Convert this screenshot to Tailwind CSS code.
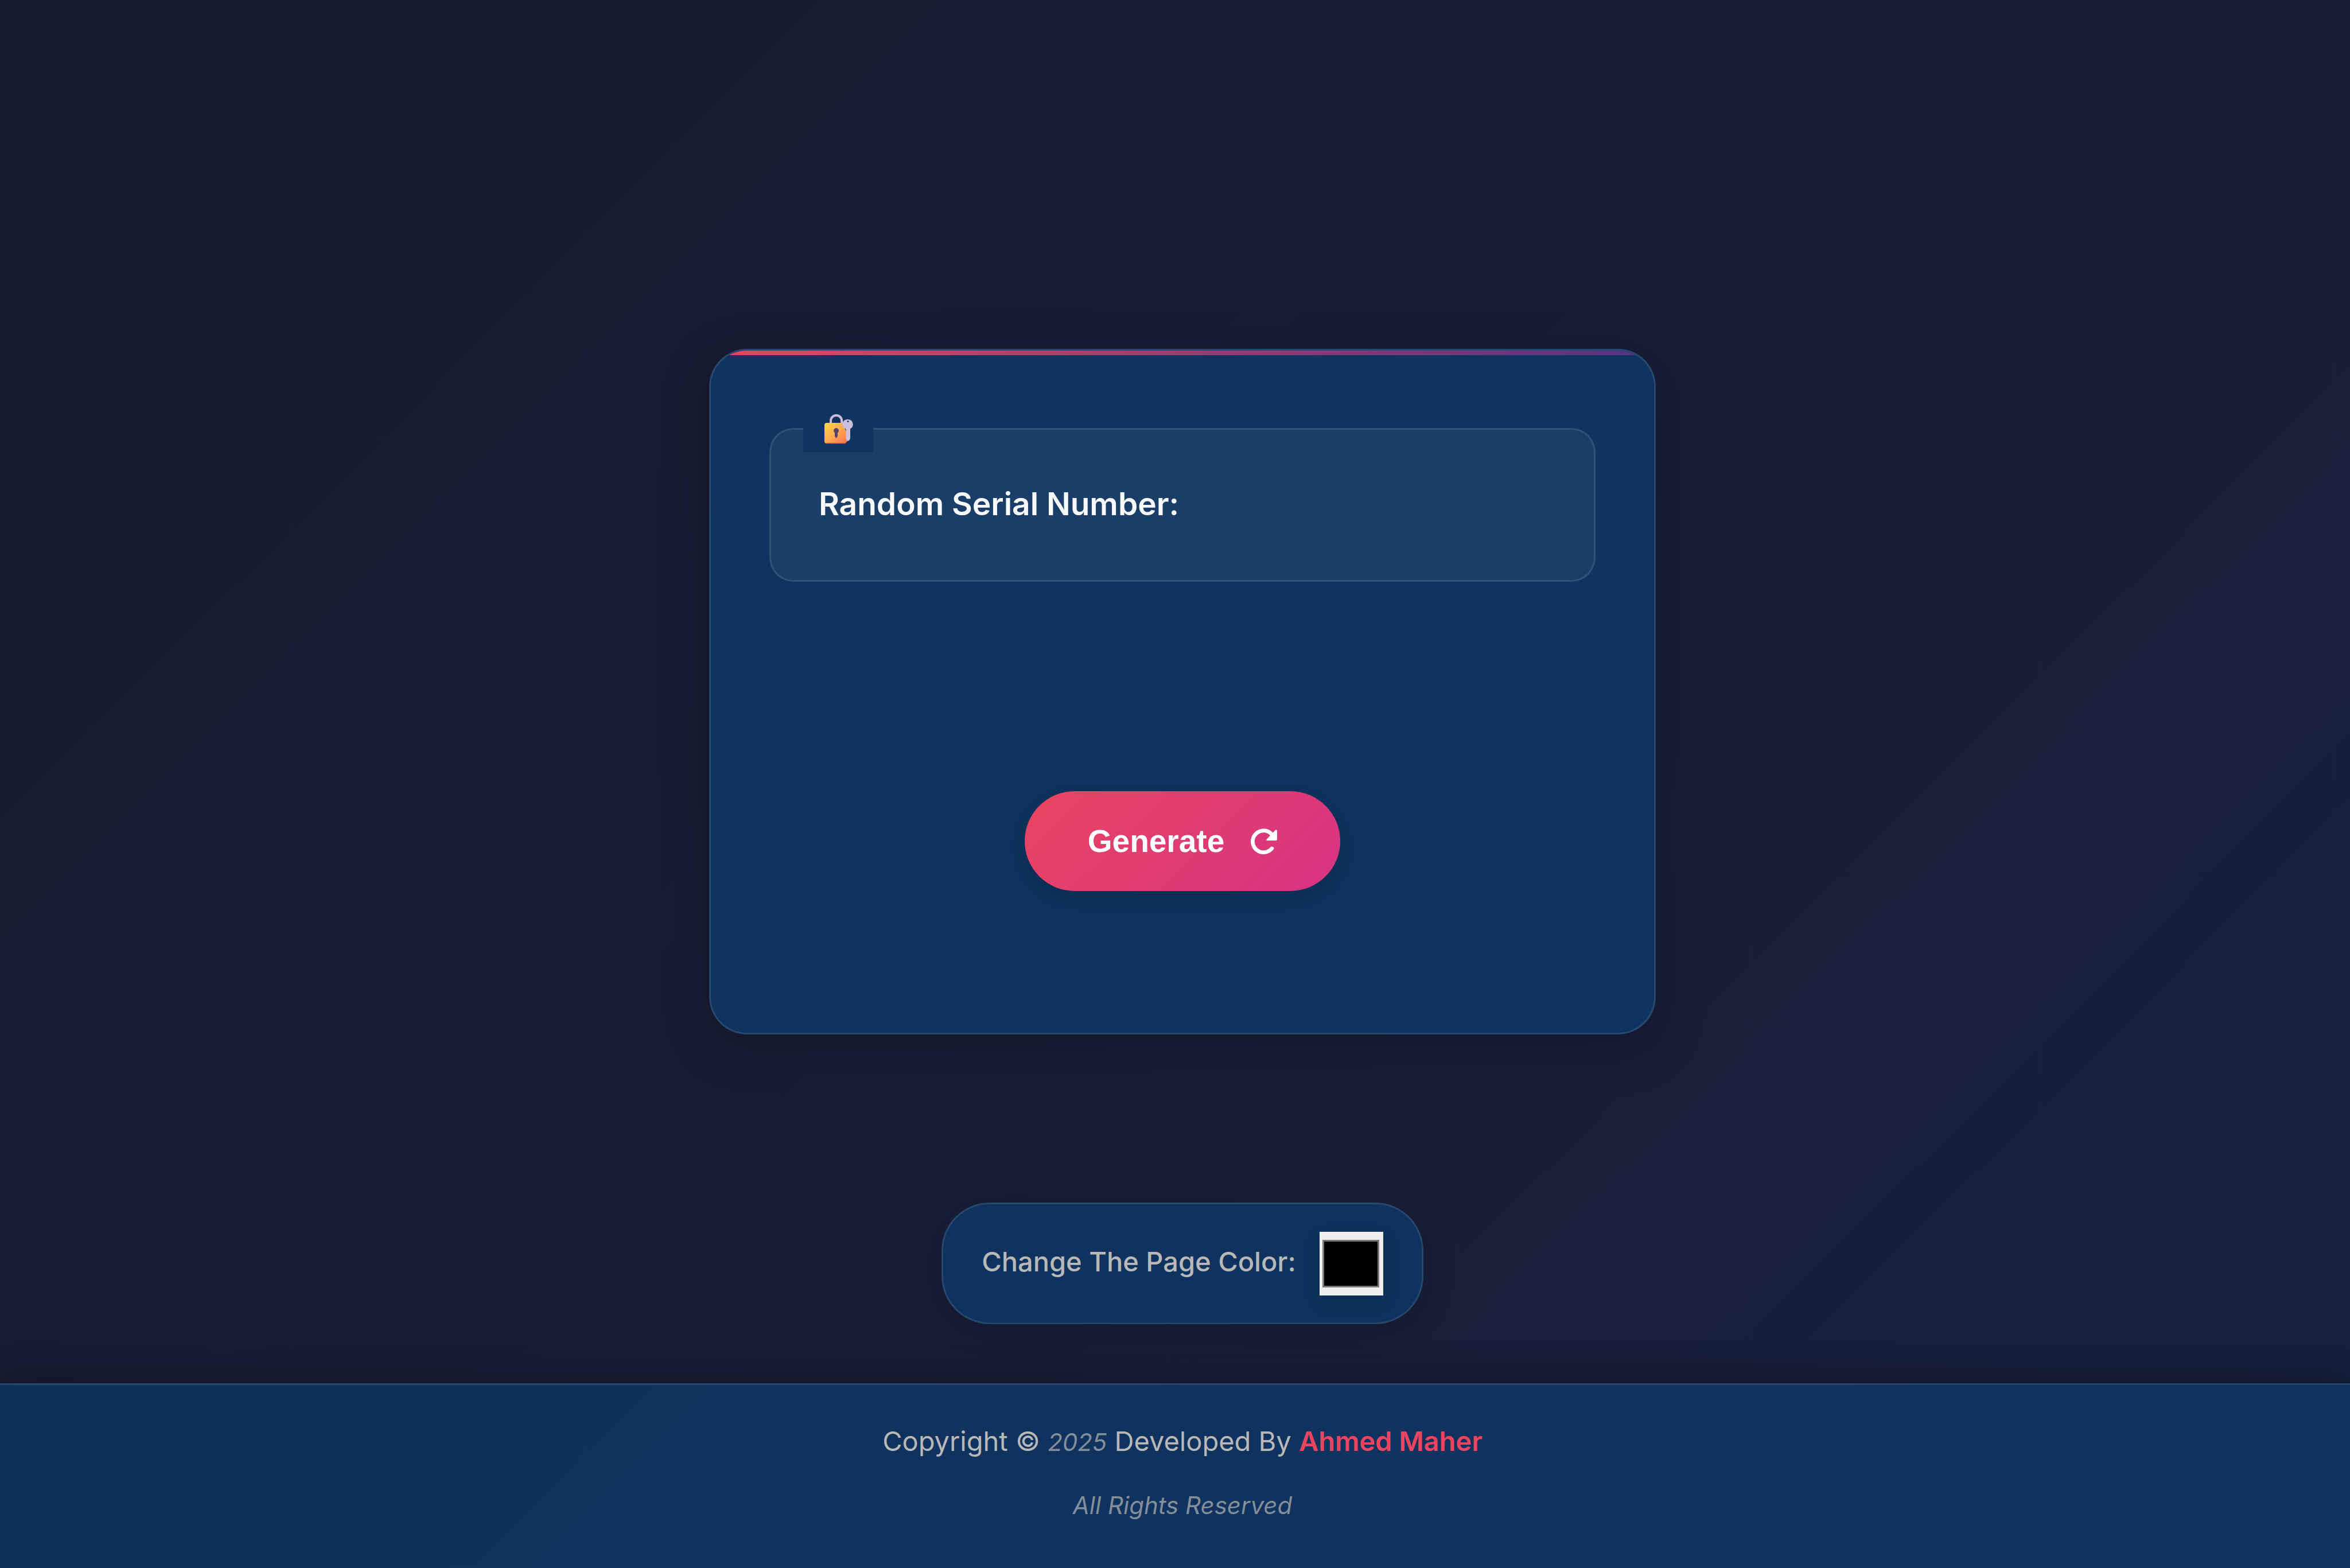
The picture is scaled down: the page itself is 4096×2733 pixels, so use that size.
<!DOCTYPE html>
<html lang="en">
<head>
<meta charset="utf-8">
<meta name="viewport" content="width=device-width, initial-scale=1">
<title>Random Serial Number</title>
<script src="https://cdn.jsdelivr.net/npm/@tailwindcss/browser@4"></script>
</head>
<body class="flex min-h-screen flex-col bg-[linear-gradient(135deg,#1a1a2e_0%,#16213e_100%)] font-[Inter,sans-serif] text-[#f8f9fa]">
  <main class="flex flex-1 flex-col items-center gap-[293px] pt-[608px] pb-[101px] pl-[26px]">
    <section class="relative flex w-[1650px] max-w-full flex-col items-center overflow-hidden rounded-[66px] border-3 border-white/10 bg-[#0f3460] px-[102px] pt-[96px] pb-[247px] shadow-[0_21px_84px_rgba(0,0,0,0.25)]">
      <div class="absolute inset-x-0 top-0 h-[8px] bg-[linear-gradient(90deg,#e94560,#533483)]"></div>
      <fieldset class="w-full rounded-[42px] border-3 border-white/10 bg-white/5 px-[83px] pt-[45px] pb-[88px]">
        <legend class="-ml-[27px] flex h-[81px] w-[122px] items-center bg-[#0f3460] pl-[36px]">
          <svg class="h-[52px] w-[52px]" viewBox="0 0 52 52" role="img" aria-label="Locked with key">
            <defs>
              <linearGradient id="lock-body" x1="0" y1="0" x2="1" y2="1">
                <stop offset="0" stop-color="#ffd84a"/>
                <stop offset="0.5" stop-color="#fdab4c"/>
                <stop offset="1" stop-color="#f56f4e"/>
              </linearGradient>
            </defs>
            <path d="M12 17V11.500a9.600 9.600 0 0 1 19.200 0V17" fill="none" stroke="#cbbcd9" stroke-width="4"/>
            <path d="M5 15H33C33 22 38 25 39 31L42 46L37 51H5Q1 51 1 47V19Q1 15 5 15Z" fill="url(#lock-body)"/>
            <path d="M4 50.500H37" stroke="#d8605a" stroke-width="1.500"/>
            <path d="M21.500 24a4.600 4.600 0 0 1 2.500 8.300V38L21.500 42L19 38V32.300A4.600 4.600 0 0 1 21.500 24Z" fill="#533f70"/>
            <path fill-rule="evenodd" d="M42 9a8.600 8.600 0 0 1 4 16.200V42L44 46L41 46.500L38.500 43V25.800A8.600 8.600 0 0 1 42 9ZM42 11a1.500 1.500 0 1 0 .01 0Z" fill="#cdbfdf"/>
          </svg>
        </legend>
        <p class="text-[55px] leading-[90px] font-semibold">Random Serial Number:</p>
      </fieldset>
      <button type="button" class="mt-[365px] flex h-[174px] w-[550px] items-center justify-center gap-[46px] rounded-full bg-[linear-gradient(135deg,#e94560,#d63384)] font-['Liberation_Sans',Arial,sans-serif] text-[55px] font-bold text-white shadow-[0_11px_42px_rgba(0,0,0,0.2)]">
        Generate
        <svg class="h-[46px] w-[46px]" viewBox="0 0 48 48" fill="none" aria-hidden="true">
          <path d="M38.500 37.500A19.800 19.800 0 1 1 36 9.500L41 14.500" stroke="#fff" stroke-width="7" stroke-linecap="round"/>
          <path d="M45.500 3.500Q48 3 48 6V20.500Q48 23 45.500 23H31Q27 23 29.500 20Z" fill="#fff"/>
        </svg>
      </button>
    </section>

    <div class="flex h-[212px] items-center gap-[41px] rounded-[84px] border-3 border-white/10 bg-[#0f3460]/95 px-[67px] shadow-[0_11px_52px_rgba(0,0,0,0.2)]">
      <label for="page-color" class="pb-[6px] text-[47px] leading-[76px] font-medium text-[#b8b8b8]">Change The Page Color:</label>
      <input id="page-color" type="color" value="#000000" class="h-[111px] w-[111px] border-0 bg-[#efefef] pt-[14px] pr-[7px] pb-[14px] pl-[5px] shadow-[0_11px_32px_rgba(0,0,0,0.1)] [&::-webkit-color-swatch-wrapper]:p-0 [&::-webkit-color-swatch]:border-3 [&::-webkit-color-swatch]:border-[#777777]">
    </div>
  </main>

  <footer class="flex h-[322px] flex-col items-center gap-[34px] border-t-3 border-white/10 bg-[#0f3460]/95 pt-[60px] pl-[26px] shadow-[0_-11px_52px_rgba(0,0,0,0.3)]">
    <p class="text-[47px] leading-[76px] text-[#b8b8b8]">Copyright © <em class="text-[42px] text-[#b8b8b8]/70">2025</em> Developed By <a href="#" class="font-semibold text-[#e94560]">Ahmed Maher</a></p>
    <p class="text-[42px] leading-[76px] text-[#b8b8b8]/70 italic">All Rights Reserved</p>
  </footer>
</body>
</html>
